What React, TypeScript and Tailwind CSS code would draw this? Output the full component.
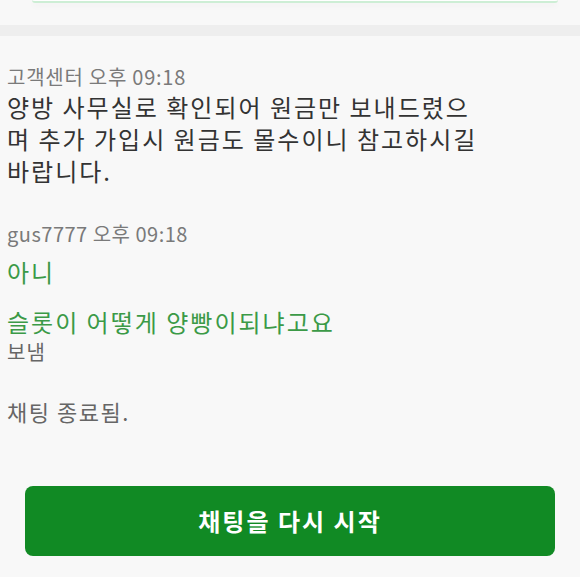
import React from 'react';

const font = { fontFamily: '"Noto Sans CJK KR", "Noto Sans", sans-serif' };

export default function App() {
  return (
    <div className="w-[580px] h-[577px] overflow-hidden bg-[#f8f8f8] flex flex-col" style={font}>
      {/* bottom edge of previous card */}
      <div className="ml-[32px] w-[526px] h-[3px] bg-white border-b-2 border-[#cdeed5] rounded-b-md shadow-[0_3px_6px_rgba(0,0,0,0.04)]"></div>
      <div className="mt-[22px] h-[11px] bg-[#eeeeee]"></div>

      <div className="px-[7px] flex flex-col">
        <div className="mt-[29px] text-[20px] leading-[24px] tracking-[0.75px] text-[#7a7a7a]">고객센터 오후 09:18</div>
        <p className="mt-[2px] text-[24px] leading-[32px] tracking-[2px] text-[#333333]">
          양방 사무실로 확인되어 원금만 보내드렸으
          <br />
          며 추가 가입시 원금도 몰수이니 참고하시길
          <br />
          바랍니다.
        </p>

        <div className="mt-[35px] text-[20px] leading-[24px] tracking-[0.5px] text-[#7a7a7a]">gus7777 오후 09:18</div>
        <div className="mt-[10px] text-[24px] leading-[32px] tracking-[2px] text-[#3b9a47]">아니</div>
        <div className="mt-[18px] text-[24px] leading-[32px] tracking-[2px] text-[#3b9a47]">슬롯이 어떻게 양빵이되냐고요</div>
        <div className="mt-[2px] text-[20px] leading-[24px] tracking-[1px] text-[#666666]">보냄</div>

        <div className="mt-[31px] text-[22px] leading-[32px] tracking-[1.5px] text-[#666666]">채팅 종료됨.</div>
      </div>

      <div className="mt-[59px] px-[25px]">
        <button className="w-[530px] h-[70px] rounded-[8px] bg-[#118a24] text-white text-[24px] font-bold tracking-[2px] flex items-center justify-center">
          채팅을 다시 시작
        </button>
      </div>
    </div>
  );
}
